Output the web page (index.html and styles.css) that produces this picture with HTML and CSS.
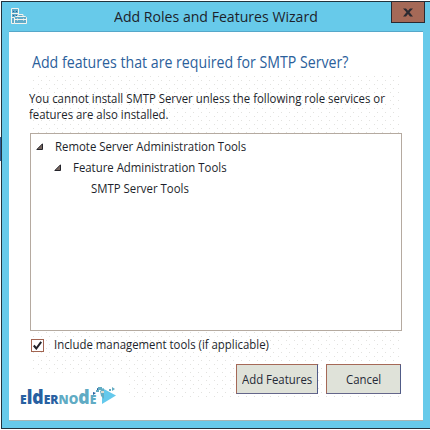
FILE: index.html
```html
<!DOCTYPE html>
<html lang="en">
<head>
<meta charset="utf-8">
<title>Add Roles and Features Wizard</title>
<link rel="stylesheet" href="styles.css">
</head>
<body>
<div class="window">
  <header class="titlebar">
    <svg class="app-icon" width="17" height="17" viewBox="0 0 17 17" fill="none" stroke="#f4f4ee">
      <path d="M4.500 15.500H1.500V.5h7V6" fill="#60abc9"/>
      <path d="M3 3.500h1m2 0h1M3 7.500h1m2 0h1" stroke="#2c5c94"/>
      <path d="M2 5.500h6M2 9.500h2"/>
      <path d="M4.500 9.500l1-1h10l1 1v6h-12zM8 8V6.500h5V8M5 11.500h11M7.500 10.500v2m6-2v2" fill="#60abc9"/>
    </svg>
    <h1 class="title"><span class="fit">Add Roles and Features Wizard</span></h1>
    <button class="close" aria-label="Close"><svg width="10" height="9" viewBox="0 0 10 9"><path d="M0 .5h3l2 2.300L7 .5h3L6.500 4.300 10 8.500H7L5 6 3 8.500H0l3.500-4.200z" fill="#2b2a31"/></svg></button>
  </header>
  <main class="content">
    <h2 class="heading"><span class="fit">Add features that are required for SMTP Server?</span></h2>
    <p class="intro"><span class="fit">You cannot install SMTP Server unless the following role services or</span><br><span class="fit">features are also installed.</span></p>
    <ul class="tree">
      <li class="node"><svg class="arrow" width="7" height="7" viewBox="0 0 7 7"><path d="M6.500.8v5.700H.8z" fill="#77665f" stroke="#25252c"/></svg><span class="fit">Remote Server Administration Tools</span></li>
      <li class="node child"><svg class="arrow" width="7" height="7" viewBox="0 0 7 7"><path d="M6.500.8v5.700H.8z" fill="#77665f" stroke="#25252c"/></svg><span class="fit">Feature Administration Tools</span></li>
      <li class="node leaf"><span class="fit">SMTP Server Tools</span></li>
    </ul>
    <div class="option">
      <span class="checkbox"><svg width="9" height="9" viewBox="0 0 9 9"><path d="M.8 4.500l2.500 3L8.200.8" fill="none" stroke="#222229" stroke-width="2"/></svg></span>
      <span class="fit">Include management tools (if applicable)</span>
    </div>
    <div class="actions">
      <button class="btn primary"><span class="fit">Add Features</span></button>
      <button class="btn"><span class="fit">Cancel</span></button>
    </div>
    <div class="brand">
      <span class="brand-name"><b class="sm">E</b><b>ld</b><b class="sm">ER</b><i class="sm">NO</i><i>d</i><i class="sm">E</i></span>
      <svg class="brand-mark" width="24" height="20" viewBox="0 0 24 20">
        <path d="M10 2L24 9.500 10 18z" fill="#64c9ec"/>
        <path d="M8 5l4-3v11l-3-3z" fill="#64acc2"/>
        <path d="M1 6l3 1-3 2zM5 2l3 1-3 2z" fill="#2560a0"/>
        <path d="M6 1h4v3H6zM4 4h3v2H4zM20 1l3 2-3 2zM17 3h2v2h-2z" fill="#64acc2"/>
        <path d="M9 5h3v2H9z" fill="#ddd9cf"/>
      </svg>
    </div>
  </main>
</div>
</body>
</html>
```
FILE: styles.css
```css
* { box-sizing: border-box; }
body {
  margin: 0;
  width: 430px;
  height: 430px;
  overflow: hidden;
  background: linear-gradient(#2c5c9a, #2c5c9a) 0 137px / 1px 24px no-repeat #fff;
  font: 12px/16px "Open Sans", "Noto Sans", sans-serif;
  color: #1d1f2b;
}
h1, h2, p, ul { margin: 0; padding: 0; font-weight: 400; }
.fit { display: inline-block; white-space: nowrap; transform: scaleX(0.949); transform-origin: 0 50%; }
.window {
  width: 429px;
  height: 428px;
  margin: 1px 0 0 1px;
  border: solid #22333d;
  border-width: 1px 0 1px 1px;
  background: #67caea;
}
.titlebar { height: 30px; display: flex; align-items: flex-start; border-bottom: 1px solid #56a7c9; margin-left: 7px; margin-right: 7px; }
.app-icon { margin: 6px 0 0 1px; }
.title { margin: 4px 0 0 87px; width: 204px; font-size: 15px; line-height: 20px; white-space: nowrap; }
.title .fit { transform: scaleX(0.94); }
.close {
  flex: none;
  width: 34px;
  height: 22px;
  margin: -1px -2px 0 auto;
  padding: 0;
  border: 1px solid #2a2a31;
  background: #a56957;
  display: flex;
  align-items: center;
  justify-content: center;
}
.content {
  height: 389px;
  margin: 0 7px;
  padding: 18px 21px 0;
  border-bottom: 1px solid #a7b5b4;
  background:
    linear-gradient(#fff, #fff) 0 0 / 100% 41px no-repeat,
    linear-gradient(#fff, #fff) 0 0 / 23px 100% no-repeat,
    linear-gradient(#fff, #fff) 100% 0 / 22px 100% no-repeat,
    linear-gradient(#fff, #fff) 0 100% / 100% 20px no-repeat,
    linear-gradient(#fff, #fff) 0 100% / 120px 44px no-repeat,
    conic-gradient(from 270deg at 1px 1px, #e2e2df 90deg, transparent 0) 0 0 / 8px 8px,
    conic-gradient(from 270deg at 1px 1px, #e2e2df 90deg, transparent 0) 5px 4px / 8px 8px,
    #fff;
}
.heading { height: 41px; padding-left: 2px; font-size: 16px; line-height: 24px; color: #2b609b; white-space: nowrap; }
.heading .fit { transform: scaleX(0.885); }
.intro { height: 42px; white-space: nowrap; margin-left: -1px; }
.tree {
  width: 372px;
  height: 198px;
  padding: 2px 0 0 5px;
  border: 1px solid #b5aaa0;
  background: #fff;
  list-style: none;
}
.node { display: flex; align-items: center; height: 21px; }
.arrow { margin-right: 12px; }
.child { padding-left: 18px; }
.leaf { padding-left: 55px; }
.option { display: flex; align-items: center; height: 16px; margin: 6px 0 0 1px; }
.checkbox { display: flex; align-items: center; justify-content: center; width: 13px; height: 13px; margin-right: 10px; border: 1px solid #a26451; background: #fff; }
.actions { display: flex; justify-content: flex-end; gap: 8px; margin: 11px 1px 0 0; }
.btn {
  height: 30px;
  width: 75px;
  padding: 2px 0 0 19px;
  border: 1px solid #a56957;
  border-right-color: #505b87;
  border-bottom-color: #64668a;
  background: #dfe2d9;
  font: inherit;
  color: #252936;
  text-align: left;
}
.primary { width: 82px; padding-left: 5px; }
.brand { display: flex; align-items: flex-start; height: 22px; margin: -8px 0 0 -10px; }
.brand-name { display: flex; align-items: baseline; flex: none; width: 72px; font: 800 19px/22px "Open Sans", sans-serif; color: #2860a1; transform: scaleX(0.93); transform-origin: 0 50%; }
.brand-name b, .brand-name i { font-weight: 800; font-style: normal; }
.brand-name i { color: #60abc4; }
.brand-name .sm { font-size: 13px; }
```
